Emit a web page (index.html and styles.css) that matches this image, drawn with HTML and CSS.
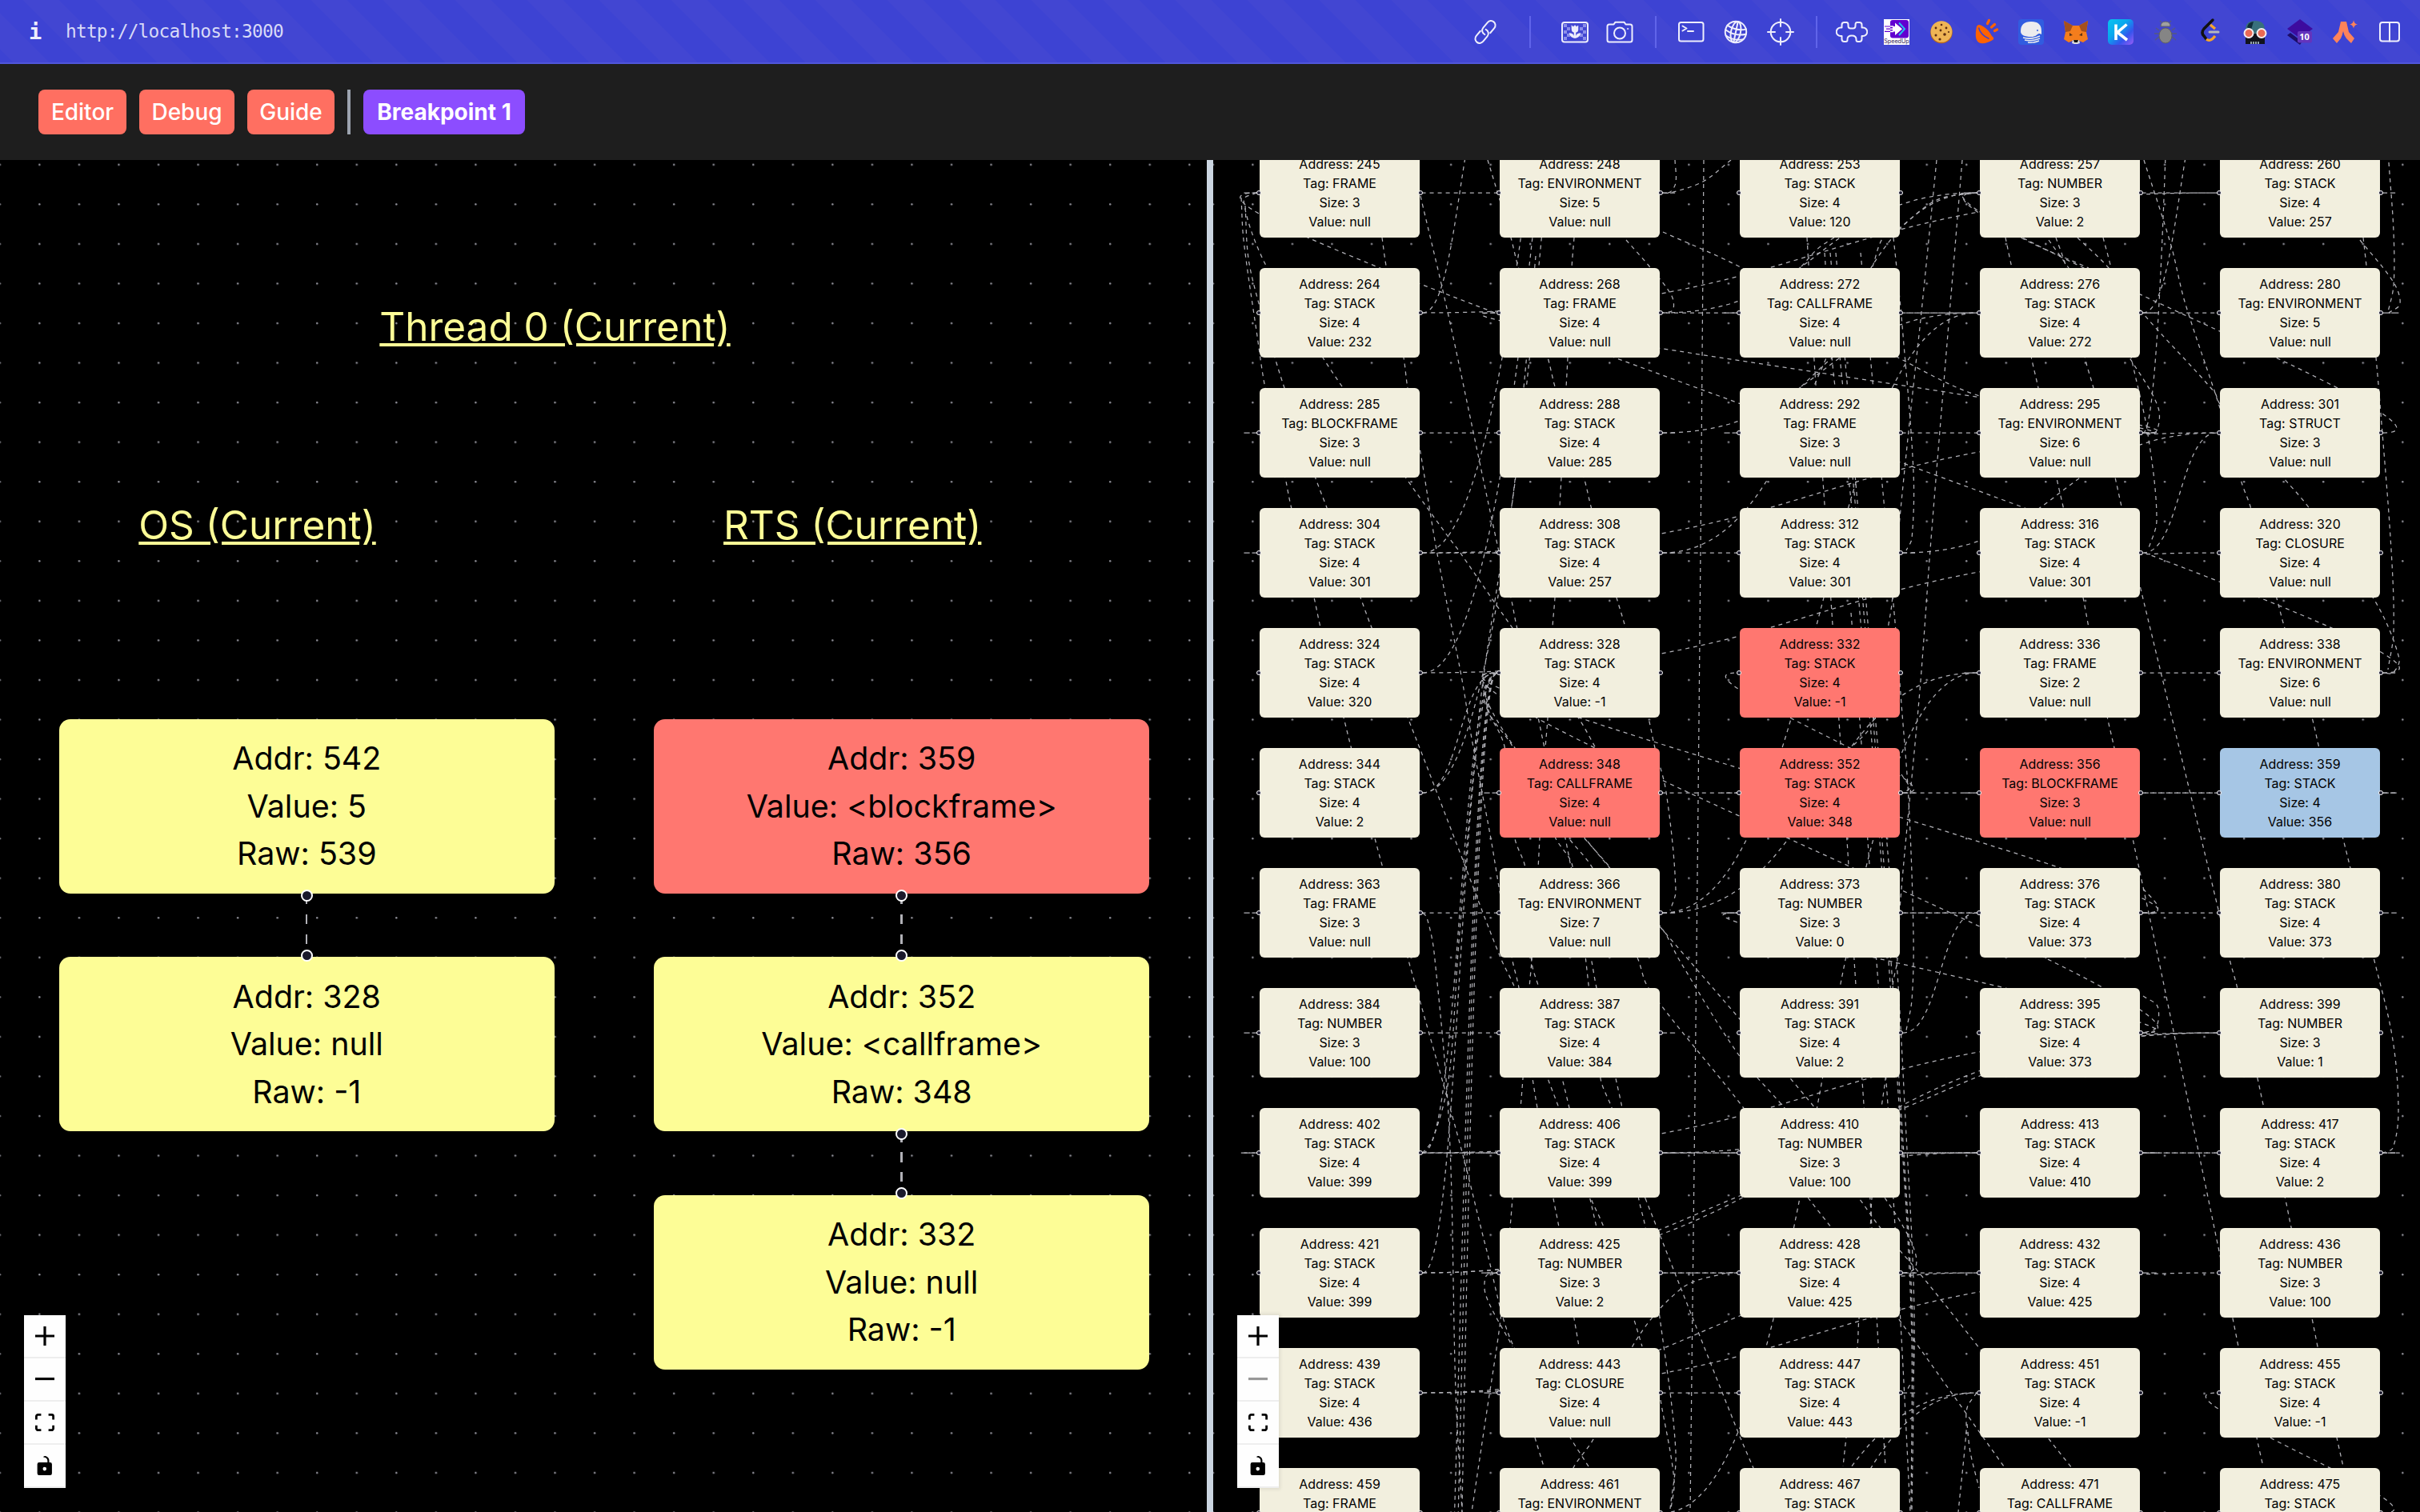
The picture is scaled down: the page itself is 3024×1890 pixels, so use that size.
FILE: index.html
```html
<!DOCTYPE html>
<html lang="en">
<head>
<meta charset="utf-8">
<title>Breakpoint 1</title>
<link rel="stylesheet" href="styles.css">
</head>
<body>
<header class="browser">
  <span class="info">i</span>
  <span class="url">http://localhost:3000</span>
  <nav class="tools">
    <svg class="slot line" viewBox="0 0 40 40"><g transform="rotate(-50 20 20)"><path d="M17 14.500H9a5.500 5.500 0 0 0 0 11h8.500a5.500 5.500 0 0 0 5.300-7"/><path d="M23 25.500h8a5.500 5.500 0 0 0 0-11h-8.500a5.500 5.500 0 0 0-5.300 7"/></g></svg>
    <i class="rule wide"></i>
    <svg class="slot line" viewBox="0 0 40 40"><rect x="4" y="8" width="32" height="24.500" rx="3"/><path class="haze" d="M6 10h4v4h4v4h-4v4h4v4h-4v4H6v-4h4v-4H6v-4h4v-4H6zM30 10h4v4h-4v4h4v4h-4v4h4v4h-4v-4h-4v-4h4v-4h-4v-4h4z"/><path class="solid" d="M16 12l2 1.500 2-2 2 2 2-1.500v5q0 3-3 3.500v5q1-4 6-4-1 5-6 6h-2q-5-1-6-6 5 0 6 4v-5q-3-.5-3-3.500z"/></svg>
    <svg class="slot line" viewBox="0 0 40 40"><path d="M4.500 13q0-2.500 2.500-2.500h5.500l2-2.800h11l2 2.800H33q2.500 0 2.500 2.500v17q0 2.500-2.500 2.500H7q-2.500 0-2.500-2.500z"/><circle cx="20" cy="21.500" r="7"/><circle class="solid" cx="30" cy="16" r=".8"/></svg>
    <i class="rule"></i>
    <svg class="slot line" viewBox="0 0 40 40"><rect x="5" y="8" width="30.500" height="23.500" rx="2.500"/><path d="M9.500 12.500l5 3-5 3M16 19h7"/></svg>
    <svg class="slot line" viewBox="0 0 40 40"><g transform="rotate(12 20 20)"><circle cx="20" cy="20" r="13.200"/><ellipse cx="20" cy="20" rx="6" ry="13.200"/><path d="M20 7v26M8 14q12 5 24 0M7 20q13 6 26 0M9 27q11 5 22 0"/></g></svg>
    <svg class="slot line" viewBox="0 0 40 40"><circle cx="20" cy="20" r="12.300"/><path d="M20 4v9M20 27v9M4 20h9M27 20h9"/></svg>
    <i class="rule"></i>
    <svg class="slot line" viewBox="0 0 40 40"><path d="M10.500 8h3q2 0 2 3v1.500q0 3 3 3h3q3 0 3-3V11q0-3 2-3h3q3 0 3 3v3.500h1.500a5 5 0 0 1 0 10.500h-1.500v4q0 3-3 3h-2q-2 0-2-2v-1q0-4.500-5.500-4.500T14.500 29v1q0 2-2 2h-2q-3 0-3-3v-4H6a5 5 0 0 1 0-10.500h1.500V11q0-3 3-3z"/></svg>
    <svg class="slot" viewBox="0 0 40 40"><rect x="4" y="4" width="32" height="32" fill="#fff"/><rect x="12" y="5" width="23" height="22.500" rx="3" fill="#6200d0"/><path d="M23 8.500l7 7.700-7 7.800" fill="none" stroke="#25c0ee" stroke-width="2"/><path d="M15 13h3V8.500l9 7.700-9 7.800v-4.500h-3z" fill="#fff"/><path d="M5 13h7M7 16.200h5M5 19.400h7" stroke="#6200d0" stroke-width="1.200"/><path d="M12 13h4M12 16.200h4M12 19.400h4" stroke="#fff" stroke-width="1.600"/><text class="speed" x="20" y="33.500">SpeedUp</text></svg>
    <svg class="slot" viewBox="0 0 40 40"><circle cx="20" cy="20.500" r="13.800" fill="#b9691c"/><circle cx="20" cy="19.500" r="13.300" fill="#eeb455"/><g fill="#5c2c12"><circle cx="13" cy="15" r="1.400"/><circle cx="20" cy="11" r="1.300"/><circle cx="26" cy="15" r="1.400"/><circle cx="19" cy="18" r="1.400"/><circle cx="13" cy="24" r="1.500"/><circle cx="24" cy="23" r="1.800"/><circle cx="18" cy="29" r="1.600"/><circle cx="29" cy="20" r="1.100"/></g></svg>
    <svg class="slot" viewBox="0 0 40 40"><path d="M8 13q2-4 8 0 7 4 11 12 4 3 1 5-8 5-15 4-9-2-5-21z" fill="#ff6200"/><path d="M10.500 14.500q2 9 13 14" fill="none" stroke="#3d43d3" stroke-width="1.500"/><path d="M21.500 9.500l2-4M26.500 14l4-3.500M30.500 18.500l3-1.500" stroke="#ff6200" stroke-width="3.300" stroke-linecap="round"/></svg>
    <svg class="slot" viewBox="0 0 40 40"><rect x="4" y="4" width="32" height="32" rx="4" fill="#315ce0"/><path d="M7 19Q7 7 20 7t13 12v4q-3-2-5 0-3 3-8 3-13 0-13-7" fill="#ececee"/><path d="M10 27q10 3 21-2M12 30q9 2 19-2M16 33q7 1 14-2" fill="none" stroke="#ececee" stroke-width="1.500"/><circle cx="28" cy="18" r="1" fill="#315ce0"/></svg>
    <svg class="slot" viewBox="0 0 40 40"><path d="M5 6l11 6h8l11-6-2 14 2 9-6 4-5-2h-8l-5 2-6-4 2-9z" fill="#f47d1c"/><path d="M5 6l11 6-3 7-6 1zM35 6l-11 6 3 7 6 1z" fill="#a5501d"/><path d="M12 21l4 3-4 1zM28 21l-4 3 4 1z" fill="#5a3216"/><path d="M16 30h8l1 4-3 1h-4l-3-1z" fill="#ddd"/><path d="M17 30h6l-1 3h-4z" fill="#151515"/></svg>
    <svg class="slot" viewBox="0 0 40 40"><defs><linearGradient id="k" x1="0" y1="0" x2="1" y2="1"><stop offset="0" stop-color="#08c4f0"/><stop offset=".4" stop-color="#08a7ee"/><stop offset=".7" stop-color="#3454ee"/><stop offset="1" stop-color="#9b5df5"/></linearGradient></defs><rect x="4" y="4" width="32" height="32" rx="5" fill="url(#k)"/><path d="M14 10.500v19.500M27.500 10.500L16 20.500l12 9.500" fill="none" stroke="#fff" stroke-width="3.600"/></svg>
    <svg class="slot" viewBox="0 0 40 40"><path d="M12 18l-4-3M12 22H6M12 26l-5 4M28 18l4-3M28 22h6M28 26l5 4M15 8l-2-2M25 8l2-2" stroke="#555a80" stroke-width="1.500"/><path d="M14 13q0-6 6-6t6 6z" fill="#a0a0a0" stroke="#5f5f66"/><ellipse cx="20" cy="24.500" rx="8" ry="9.500" fill="#858585" stroke="#5f5f66"/></svg>
    <svg class="slot" viewBox="0 0 40 40"><path d="M23 5L12 16q-4 5 0 9l3 4" fill="none" stroke="#111" stroke-width="3.500" stroke-linecap="round"/><path d="M20 11l6 5M15 29q5 4 11-4" fill="none" stroke="#f6a52c" stroke-width="3.300"/><path d="M19 20h11" stroke="#b5b7bd" stroke-width="3" stroke-linecap="round"/></svg>
    <svg class="slot" viewBox="0 0 40 40"><path d="M8 17q0-11 12-11t12 11v5H8z" fill="#38707c"/><path d="M10 14q1-6 8-7l-3 10z" fill="#102d3a"/><path d="M8 22h24v13H8z" fill="#11131d"/><circle cx="12" cy="21.500" r="5.500" fill="#ea6a55" stroke="#f5eef0" stroke-width="2"/><circle cx="28" cy="21.500" r="5.500" fill="#ea6a55" stroke="#f5eef0" stroke-width="2"/><path d="M15 32v3M18 32v3M21 32v3M24 32v3" stroke="#d8efef" stroke-width="1.300"/></svg>
    <svg class="slot" viewBox="0 0 40 40"><path d="M4 24l4-3 12 9 8-6-8 12z" fill="#1c0d68"/><path d="M20 4l16 12-16 12L4 16z" fill="#3d0b9f"/><rect x="17" y="19" width="18" height="14.500" rx="2" fill="#6334bd"/><text class="count" x="25.500" y="30">10</text></svg>
    <svg class="slot" viewBox="0 0 40 40"><path d="M15 7h7l3 13 7 8-4 6-6-6q-3-4-4-9-1 5-3 9l-5 6-5-6 7-8z" fill="#ff835a"/><path d="M31 5q.8 5 5 5.500-4.200.5-5 5-.8-4.500-5-5 4.200-.5 5-5" fill="#ff835a"/></svg>
    <svg class="slot line" viewBox="0 0 40 40"><rect x="8" y="8" width="24" height="23.500" rx="3"/><path d="M20 8v23.500"/></svg>
  </nav>
</header>

<div class="toolbar">
  <button class="btn editor">Editor</button>
  <button class="btn debug">Debug</button>
  <button class="btn guide">Guide</button>
  <span class="bar"></span>
  <button class="btn breakpoint">Breakpoint 1</button>
</div>

<main class="split">
  <section class="pane stacks">
    <svg class="layer" width="1508" height="1690">
      <defs><pattern id="dots" x="-1.450" y="4.600" width="49.550" height="49.550" patternUnits="userSpaceOnUse"><circle cx="1.240" cy="1.240" r="1.240" fill="#91919a"/></pattern></defs>
      <rect width="1508" height="1690" fill="url(#dots)"/>
    </svg>
    <h2 class="title thread">Thread 0 (Current)</h2>
    <h2 class="title os">OS (Current)</h2>
    <h2 class="title rts">RTS (Current)</h2>
    <div class="column os-column">
      <div class="frame out">Addr: 542<br>Value: 5<br>Raw: 539</div>
      <div class="frame in">Addr: 328<br>Value: null<br>Raw: -1</div>
    </div>
    <div class="column rts-column">
      <div class="frame active out">Addr: 359<br>Value: &lt;blockframe&gt;<br>Raw: 356</div>
      <div class="frame in out">Addr: 352<br>Value: &lt;callframe&gt;<br>Raw: 348</div>
      <div class="frame in">Addr: 332<br>Value: null<br>Raw: -1</div>
    </div>
    <div class="controls">
      <div><svg viewBox="0 0 32 32"><path d="M32 18.133H18.133V32h-4.266V18.133H0v-4.266h13.867V0h4.266v13.867H32z"/></svg></div>
      <div><svg viewBox="0 0 32 5"><path d="M0 0h32v4.200H0z"/></svg></div>
      <div><svg viewBox="0 0 32 30"><path d="M3.692 4.630c0-.53.4-.938.939-.938h5.215V0H4.708C2.130 0 0 2.054 0 4.630v5.216h3.692V4.631zM27.354 0h-5.200v3.692h5.170c.53 0 .984.4.984.939v5.215H32V4.631A4.624 4.624 0 0027.354 0zm.954 24.830c0 .532-.4.94-.939.94h-5.215v3.768h5.215c2.577 0 4.631-2.130 4.631-4.707v-5.139h-3.692v5.139zm-23.677.94c-.531 0-.939-.4-.939-.94v-5.138H0v5.139c0 2.577 2.130 4.707 4.708 4.707h5.138V25.770H4.631z"/></svg></div>
      <div><svg viewBox="0 0 25 32"><path d="M21.333 10.667H19.810V7.619C19.810 3.429 16.380 0 12.190 0c-4.114 1.828-1.370 2.133.305 2.438 1.676.305 4.420 2.590 4.420 5.181v3.048H3.047A3.056 3.056 0 000 13.714v15.238A3.056 3.056 0 003.048 32h18.285a3.056 3.056 0 003.048-3.048V13.714a3.056 3.056 0 00-3.048-3.047zM12.190 24.533a3.056 3.056 0 01-3.047-3.047 3.056 3.056 0 013.047-3.048 3.056 3.056 0 013.048 3.048 3.056 3.056 0 01-3.048 3.047z"/></svg></div>
    </div>
  </section>
  <div class="divider"></div>
  <section class="pane heap">
    <svg class="layer" width="1508" height="1690" viewBox="0 0 1508 1690">
      <rect width="1508" height="1690" fill="url(#dots)"/>
      <g id="edges" class="edges" transform="translate(-1516 -200)"></g>
    </svg>
    <div id="nodes" class="nodes"></div>
    <div class="controls">
      <div><svg viewBox="0 0 32 32"><path d="M32 18.133H18.133V32h-4.266V18.133H0v-4.266h13.867V0h4.266v13.867H32z"/></svg></div>
      <div class="disabled"><svg viewBox="0 0 32 5"><path d="M0 0h32v4.200H0z"/></svg></div>
      <div><svg viewBox="0 0 32 30"><path d="M3.692 4.630c0-.53.4-.938.939-.938h5.215V0H4.708C2.130 0 0 2.054 0 4.630v5.216h3.692V4.631zM27.354 0h-5.200v3.692h5.170c.53 0 .984.4.984.939v5.215H32V4.631A4.624 4.624 0 0027.354 0zm.954 24.830c0 .532-.4.94-.939.94h-5.215v3.768h5.215c2.577 0 4.631-2.130 4.631-4.707v-5.139h-3.692v5.139zm-23.677.94c-.531 0-.939-.4-.939-.94v-5.138H0v5.139c0 2.577 2.130 4.707 4.708 4.707h5.138V25.770H4.631z"/></svg></div>
      <div><svg viewBox="0 0 25 32"><path d="M21.333 10.667H19.810V7.619C19.810 3.429 16.380 0 12.190 0c-4.114 1.828-1.370 2.133.305 2.438 1.676.305 4.420 2.590 4.420 5.181v3.048H3.047A3.056 3.056 0 000 13.714v15.238A3.056 3.056 0 003.048 32h18.285a3.056 3.056 0 003.048-3.048V13.714a3.056 3.056 0 00-3.048-3.047zM12.190 24.533a3.056 3.056 0 01-3.047-3.047 3.056 3.056 0 013.047-3.048 3.056 3.056 0 013.048 3.048 3.056 3.056 0 01-3.048 3.047z"/></svg></div>
    </div>
  </section>
</main>
<script src="heap.js"></script>
</body>
</html>
```
FILE: styles.css
```css
*, *::before, *::after { box-sizing: border-box; }
body {
  margin: 0;
  width: 3024px;
  height: 1890px;
  overflow: hidden;
  background: #000;
  font-family: Inter, "Liberation Sans", sans-serif;
}
.browser {
  display: flex;
  align-items: center;
  height: 80px;
  padding: 0 10px 0 36px;
  border-bottom: 2px solid #5056d9;
  background: linear-gradient(45deg, #4246d2 25%, #3d43d3 25%, #3d43d3 50%, #4246d2 50%, #4246d2 75%, #3d43d3 75%) 29px 0 / 90px 90px;
  color: #fff;
  font-family: "DejaVu Sans Mono", monospace;
}
.info { width: 46px; font-size: 27px; font-weight: bold; color: #eeeefc; }
.url { font-size: 22.800px; letter-spacing: -.780px; color: #d8daf7; }
.tools { display: flex; align-items: center; margin-left: auto; padding-top: 2px; }
.slot { width: 40px; height: 40px; margin: 0 8px; }
.line { fill: none; stroke: #eeeefc; stroke-width: 2; stroke-linejoin: round; stroke-linecap: round; }
.line .haze { fill: #8b8eea; stroke: none; }
.line .solid { fill: #eeeefc; stroke-width: .5; }
.rule { width: 2px; height: 40px; margin: 0 15px 0 16px; background: #6064ea; }
.rule.wide { margin: 0 27px; }
.speed { font: 7.200px Inter, sans-serif; text-anchor: middle; fill: #2b1450; }
.count { font: bold 11px "Noto Sans", sans-serif; text-anchor: middle; fill: #fff; }

.toolbar {
  display: flex;
  align-items: center;
  gap: 16px;
  height: 120px;
  padding: 0 48px;
  background: #1e1e1e;
}
.btn {
  height: 56px;
  padding: 0;
  border: 0;
  border-radius: 8px;
  background: #ff6f61;
  color: #fff;
  font: 500 28px/56px Inter, sans-serif;
  text-align: center;
}
.editor { width: 110px; }
.debug { width: 119px; }
.guide { width: 109px; }
.breakpoint { width: 202px; background: #8c4dff; font-weight: 700; }
.bar { width: 4px; height: 56px; background: #9ca3af; }

.split { display: flex; height: 1690px; }
.pane { position: relative; width: 1508px; overflow: hidden; background: #000; }
.divider { width: 8px; background: #cbd5e1; }
.layer { position: absolute; inset: 0; display: block; }

.title {
  position: absolute;
  margin: 0;
  color: #fdfd96;
  font-size: 49.480px;
  font-weight: 400;
  line-height: 74.340px;
  white-space: nowrap;
  text-decoration: underline;
}
.thread { left: 474.300px; top: 170.800px; }
.os { left: 173.300px; top: 418.600px; }
.rts { left: 904px; top: 418.600px; }

.column { position: absolute; top: 698.900px; display: flex; flex-direction: column; gap: 79.300px; width: 619.600px; }
.os-column { left: 73.500px; }
.rts-column { left: 816.900px; }
.column::before {
  content: "";
  position: absolute;
  left: 308.600px;
  top: 219.500px;
  bottom: 219px;
  width: 2.400px;
  background: repeating-linear-gradient(#b1b1b7 0 12.390px, transparent 12.390px 24.780px);
}
.frame {
  position: relative;
  height: 218.060px;
  padding: 20.600px 0 19px;
  border-radius: 14px;
  background: #fdfd96;
  color: #000;
  font-size: 39.400px;
  line-height: 59.470px;
  text-align: center;
}
.active { background: #ff7770; }
.in::before, .out::after {
  content: "";
  position: absolute;
  left: 302.300px;
  width: 15px;
  height: 15px;
  border: 2.500px solid #fff;
  border-radius: 50%;
  background: #1a192b;
}
.in::before { top: -9.700px; }
.out::after { bottom: -10.400px; }

.edges { fill: none; stroke: #b1b1b7; stroke-width: 1.250; stroke-dasharray: 5; }
.nodes {
  position: relative;
  display: grid;
  grid-template-columns: repeat(5, 200px);
  grid-auto-rows: 112px;
  gap: 38px 100px;
  margin: -15px 0 0 58px;
}
.cell {
  position: relative;
  padding: 8px 0;
  border-radius: 6px;
  background: #f2efde;
  color: #000;
  font-size: 16px;
  line-height: 24px;
  text-align: center;
  white-space: pre-line;
}
.cell.red { background: #ff7770; }
.cell.blue { background: #a6c6e5; }
.cell::before, .cell::after {
  content: "";
  position: absolute;
  top: 53px;
  width: 6px;
  height: 6px;
  border: 1px solid #fff;
  border-radius: 50%;
  background: #1a192b;
}
.cell::before { left: -4px; }
.cell::after { right: -4px; }

.controls {
  position: absolute;
  left: 30px;
  top: 1444px;
  width: 52px;
  box-shadow: 0 0 4px 2px rgba(0, 0, 0, .08);
}
.controls div {
  display: flex;
  align-items: center;
  justify-content: center;
  height: 54px;
  border-bottom: 2px solid #eee;
  background: #fefefe;
}
.controls svg { width: 24px; max-height: 24px; }
.controls .disabled svg { fill-opacity: .4; }
```
FILE: heap.js
```js
const cells = `245 FRAME 3 null|248 ENVIRONMENT 5 null|253 STACK 4 120|257 NUMBER 3 2|260 STACK 4 257
264 STACK 4 232|268 FRAME 4 null|272 CALLFRAME 4 null|276 STACK 4 272|280 ENVIRONMENT 5 null
285 BLOCKFRAME 3 null|288 STACK 4 285|292 FRAME 3 null|295 ENVIRONMENT 6 null|301 STRUCT 3 null
304 STACK 4 301|308 STACK 4 257|312 STACK 4 301|316 STACK 4 301|320 CLOSURE 4 null
324 STACK 4 320|328 STACK 4 -1|332 STACK 4 -1|336 FRAME 2 null|338 ENVIRONMENT 6 null
344 STACK 4 2|348 CALLFRAME 4 null|352 STACK 4 348|356 BLOCKFRAME 3 null|359 STACK 4 356
363 FRAME 3 null|366 ENVIRONMENT 7 null|373 NUMBER 3 0|376 STACK 4 373|380 STACK 4 373
384 NUMBER 3 100|387 STACK 4 384|391 STACK 4 2|395 STACK 4 373|399 NUMBER 3 1
402 STACK 4 399|406 STACK 4 399|410 NUMBER 3 100|413 STACK 4 410|417 STACK 4 2
421 STACK 4 399|425 NUMBER 3 2|428 STACK 4 425|432 STACK 4 425|436 NUMBER 3 100
439 STACK 4 436|443 CLOSURE 4 null|447 STACK 4 443|451 STACK 4 -1|455 STACK 4 -1
459 FRAME 3 null|461 ENVIRONMENT 7 null|467 STACK 4 463|471 CALLFRAME 4 null|475 STACK 4 471`
  .split(/[|\n]/).map(s => s.trim().split(' '));
const tint = { 332: 'red', 348: 'red', 352: 'red', 356: 'red', 359: 'blue' };
const place = {};
const nodes = document.getElementById('nodes');
cells.forEach(([addr, tag, size, value], i) => {
  place[addr] = [i % 5, Math.floor(i / 5)];
  const el = document.createElement('div');
  el.className = 'cell ' + (tint[addr] || '');
  el.textContent = `Address: ${addr}\nTag: ${tag}\nSize: ${size}\nValue: ${value}`;
  nodes.append(el);
});

const edges = document.getElementById('edges');
function draw(d) {
  const p = document.createElementNS('http://www.w3.org/2000/svg', 'path');
  p.setAttribute('d', d);
  edges.append(p);
}
// A link leaves the right side of its source and enters the left side of its target.
function link(from, to) {
  const [sc, sr] = place[from] || from, [tc, tr] = place[to] || to;
  const sx = 1778 + 300 * sc, sy = 241 + 150 * sr, tx = 1570 + 300 * tc, ty = 241 + 150 * tr;
  const gap = tx - sx, off = gap >= 0 ? gap / 2 : 6.25 * Math.sqrt(-gap);
  draw(`M${sx} ${sy}C${sx + off} ${sy} ${tx - off} ${ty} ${tx} ${ty}`);
}
`248-245 260-257 264-260 268-257 276-272 280-268 288-285 288-276 295-292 295-268 301-257
304-301 308-257 308-304 312-301 312-308 316-301 324-320 344-328 338-336 338-245 352-332 352-348
359-356 359-352 366-363 366-336 376-373 376-328 380-373 395-373 395-328 387-384 391-376 428-328
402-328 421-328 402-399 406-399 421-399 421-413 406-402 413-406 413-410 417-413 417-402 428-425 432-425
439-436 439-432 447-443 461-336 461-459 475-455 475-471`
  .split(/\s+/).forEach(s => link(...s.split('-')));
[['264', [1, -1]], ['276', [4, -1]], ['295', [4, -12]], ['304', [2, -12]], ['324', [2, -12]], ['344', [2, -12]],
 [[0, 15], '328'], [[0, 17], '328'], [[0, 20], '328'], ['366', '276'], [[1, 12], '451'], [[1, 13], '451']]
  .forEach(([a, b]) => link(a, b));

// Links whose far end lies outside the visible part of the heap.
const long = `1551 247 1554 300 1571 420 1581 485 1606 597 1613 632 1642 747 1650 784 1679 897 1688 933 1718 1048 1728 1085 1759 1197 1776 1257 1827 1440 1857 1560 1890 1680 1962 1797 1985 1833
1556 257 1560 323 1574 383 1593 447 1605 485 1644 598 1657 632 1700 747 1713 782 1759 897 1776 940 1826 1070 1875 1197 1893 1235 1934 1348 1948 1385 1988 1498 2004 1534 2042 1650 2052 1683
1570 241 1554 250 1581 330 1653 447 1677 483 1760 602 1809 670 1824 690 1890 785 1972 897 1994 935
1727 297 1732 332 1754 447 1759 485 1774 560 1795 687 1827 850 1839 923 1862 1043 1875 1120 1890 1201 1898 1235 1915 1348 1921 1385 1941 1498 1948 1534 1967 1648 1973 1683
1775 245 1809 390 1872 685 1888 747 1895 782 1922 897 1930 935 1956 1048 1963 1083 1988 1197 1994 1230 2019 1348 2027 1385 2048 1500 2056 1534 2075 1654 2094 1815 2087 1886
1859 200 1875 253 1888 297 1897 333 1934 447 1943 483 1980 600 1988 633 2020 747 2031 784 2060 898 2068 935 2082 990 2094 1113 2087 1138
2129 200 2125 687 2120 1190 2112 1890
2093 200 2094 228 2087 240 2075 241
2163 200 2128 227 2087 241 2075 241
2032 300 2061 333 2089 370 2090 388 2075 391
1967 297 1964 335 1959 447 1957 485 1951 597 1949 633 1943 747 1940 784 1934 898 1931 935 1924 1048 1922 1085 1914 1201 1911 1235 1903 1348 1900 1385 1890 1498 1887 1534 1875 1650 1857 1770 1839 1890
1919 320 1904 485 1890 625 1873 720 1852 860 1838 1000 1826 1141 1822 1190 1810 1350 1790 1425 1778 1441
1778 1141 1783 1147 1792 1190 1811 1413 1819 1739 1827 1890
1870 841 1855 860 1857 883 1880 933 1893 1048 1906 1085 1914 1203 1923 1235 1952 1348 1961 1385 1995 1534
1870 841 1857 860 1862 893 1890 933 1944 1048 1965 1083 2000 1348 2013 1382 2056 1498
1962 1050 1990 1085 2046 1197 2060 1235 2178 1384 2260 1498 2288 1534 2372 1648 2504 1833
1980 1048 2010 1082 2077 1161 2099 1201 2173 1319 2230 1385 2323 1498 2349 1534 2399 1592 2474 1686 2562 1801 2589 1835
1870 1591 1857 1595 1857 1620 1890 1683
2056 1498 2173 1793 2191 1835
1940 1890 1967 1833 1992 1797 2041 1681 2102 1610 2158 1591 2170 1591
2075 1750 2092 1850 2088 1886
1918 1797 1929 1833
2078 290 2173 333 2274 391 2372 447 2474 495 2640 528 2694 540 2678 541
2628 297 2638 335 2666 460 2684 543 2695 650 2684 688
2679 200 2713 307 2730 377 2774 510 2801 603 2812 633 2845 748 2854 782 2889 897 2898 935 2928 1049 2937 1085 2967 1201 2990 1300 2997 1390 2990 1435 2978 1441
2506 297 2514 335 2539 450 2547 485 2570 598 2578 633 2603 747 2610 784 2634 900 2642 935 2665 1048 2674 1090 2696 1193 2774 1569 2790 1648 2797 1683 2821 1802 2828 1833
2569 297 2582 335 2606 450 2616 485 2643 597 2651 633 2674 732 2772 1137 2786 1199 2795 1232 2821 1348 2829 1385 2856 1500 2863 1534 2889 1648 2896 1683 2920 1797 2928 1833
2560 300 2585 335 2666 455 2697 510 2694 540 2678 541
2470 241 2452 245 2474 265 2531 300 2610 335
2596 297 2635 335 2679 393 2767 490 2774 505 2854 598 2884 633 2967 750 2998 823 2990 841 2978 841
2949 300 2991 353 2999 380 2985 391
2953 297 2957 332 2969 447 2975 517 2988 687 2991 790 2984 837
2985 203 2991 290 2991 357 2984 390
2420 200 2401 390 2388 510 2375 637 2364 755 2360 780 2340 903 2313 935
2452 200 2428 490 2412 687 2399 863 2375 1123 2371 1199 2365 1232 2356 1348 2351 1385 2339 1498 2337 1534 2323 1648 2321 1683 2307 1797 2303 1833
2366 297 2370 335 2377 407 2391 590 2389 673 2382 688
2280 316 2291 466 2312 616 2324 766 2338 916 2350 1066 2361 1216 2372 1366 2383 1530 2389 1680 2388 1890
2287 316 2301 466 2317 616 2329 766 2342 916 2353 1066 2364 1216 2374 1366 2386 1560 2391 1700 2389 1890
2294 316 2307 466 2320 616 2333 766 2345 916 2359 1066 2371 1216 2381 1400 2391 1600 2391 1720 2384 1736
2325 316 2339 466 2353 616 2367 766 2376 880 2385 1000 2391 1170 2389 1250 2382 1288
2258 297 2268 466 2279 616 2289 766 2299 916 2309 1066 2318 1216 2328 1366 2337 1500 2347 1680 2356 1833
2313 766 2325 916 2335 1066 2346 1216 2358 1366 2367 1516 2377 1690 2387 1890
2340 333 2353 297 2372 286 2420 250 2470 241
2251 333 2275 308 2340 270
2251 483 2275 460 2292 445
2376 968 2386 985 2378 991
2678 1111 2696 1132 2694 1141 2678 1141
2678 1245 2696 1258 2694 1285 2678 1291
2470 1741 2458 1760 2457 1790 2447 1890
2458 1780 2462 1815 2473 1860`;
long.split('\n').forEach(row => {
  const n = row.trim().split(' ').map(Number), pt = [];
  for (let i = 0; i < n.length; i += 2) pt.push([n[i], n[i + 1]]);
  let d = `M${pt[0]}`;
  for (let i = 0; i < pt.length - 1; i++) {
    const a = pt[i - 1] || pt[i], b = pt[i], c = pt[i + 1], e = pt[i + 2] || c;
    const len = (p, q) => Math.hypot(p[0] - q[0], p[1] - q[1]) || 1;
    const m = len(b, c), k1 = m / (len(a, b) + m) / 1.5, k2 = m / (len(c, e) + m) / 1.5;
    d += `C${b[0] + (c[0] - a[0]) * k1 / 2} ${b[1] + (c[1] - a[1]) * k1 / 2} ${c[0] - (e[0] - b[0]) * k2 / 2} ${c[1] - (e[1] - b[1]) * k2 / 2} ${c}`;
  }
  draw(d);
});
```
